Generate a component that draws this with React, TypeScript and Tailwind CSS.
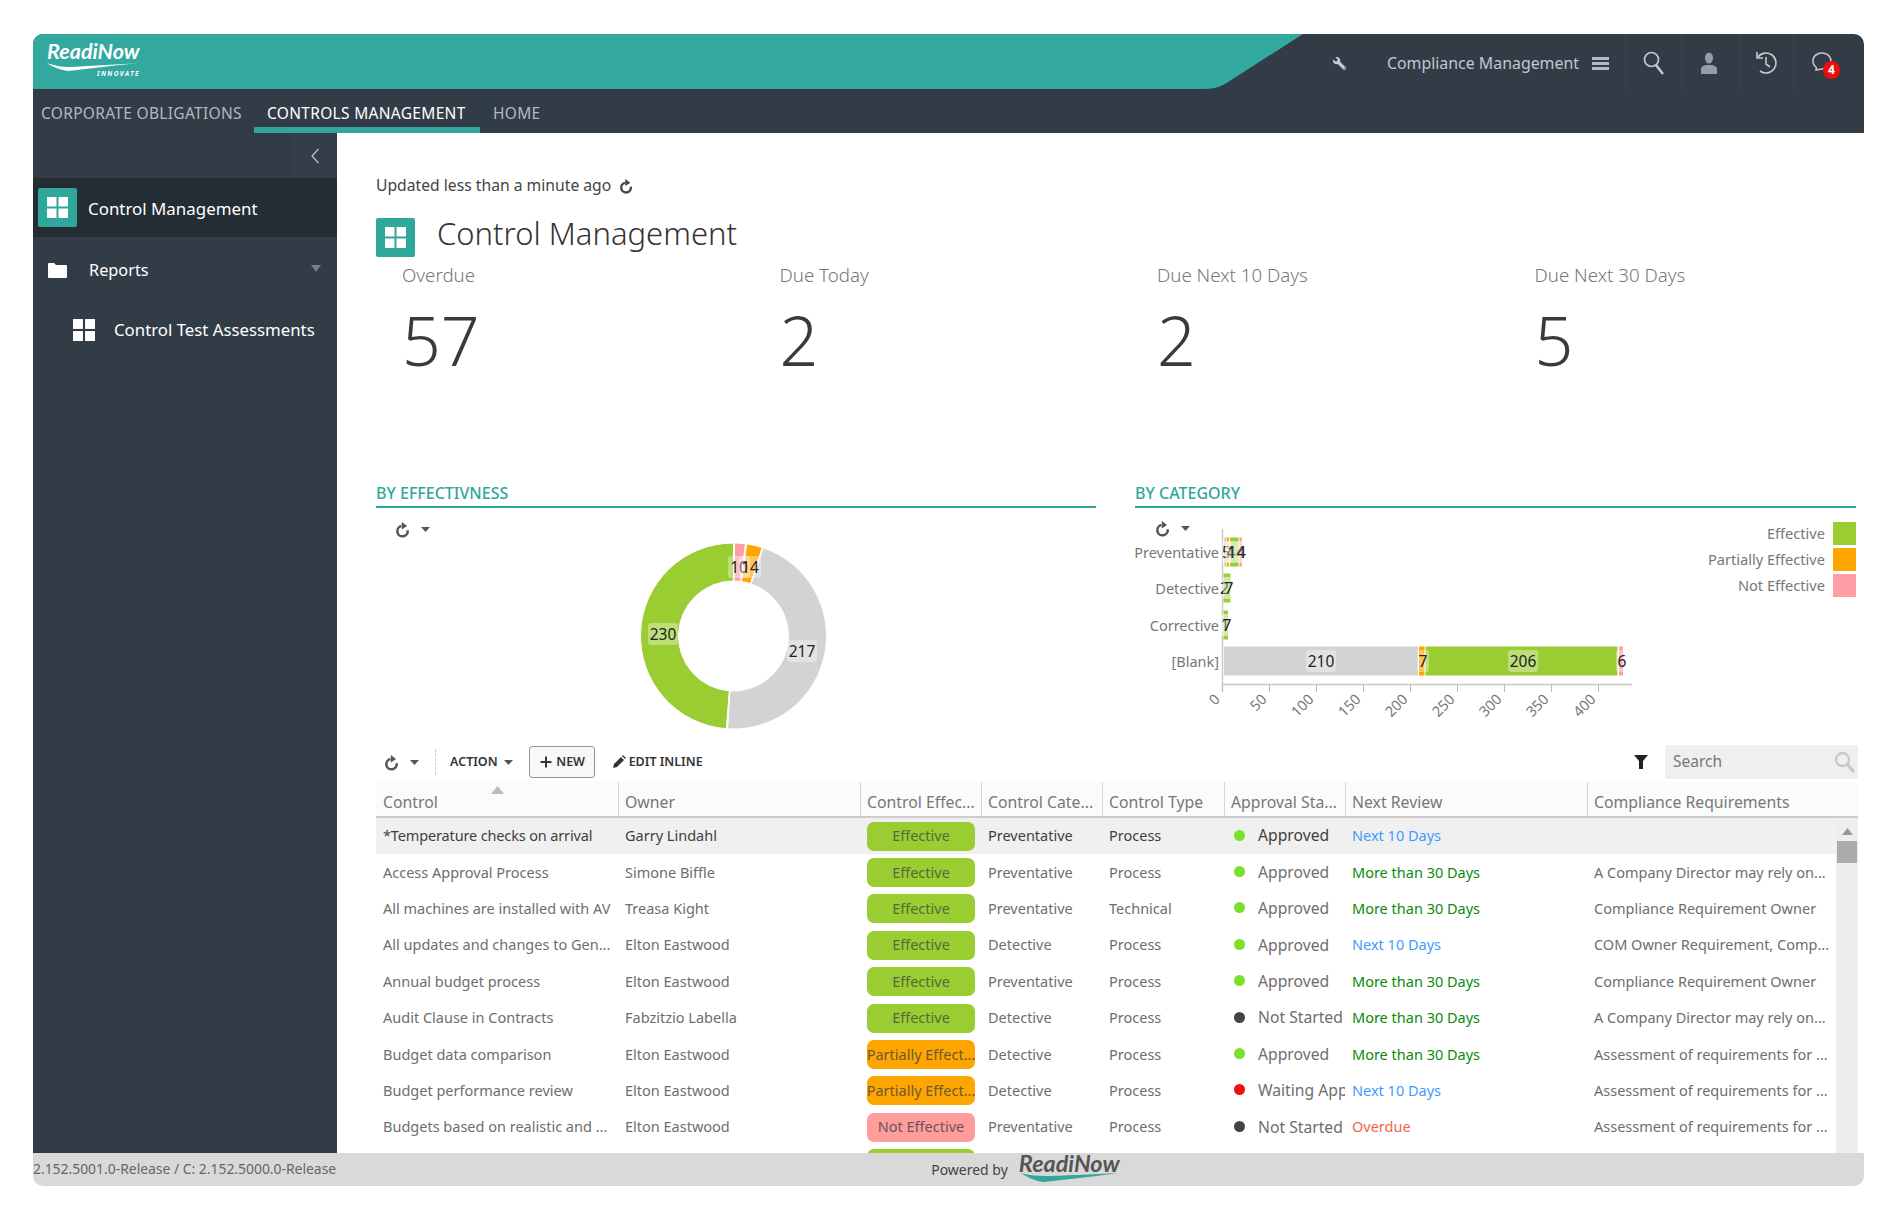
import React from "react";
import { Plus } from "lucide-react";
import { FaWrench } from "react-icons/fa";

const Refresh = ({ s = 17, c = "#444" }: { s?: number; c?: string }) => (
  <svg width={s} height={s} viewBox="0 0 24 24" className="shrink-0">
    <path d="M10.5 7.2A7.3 7.3 0 1 0 19.2 13" fill="none" stroke={c} strokeWidth="3.6" />
    <path d="M11 1.5l7.5 5.7-7.5 4.8z" fill={c} />
  </svg>
);
const Caret = ({ c = "#555" }: { c?: string }) => (
  <svg width="9" height="5" viewBox="0 0 9 5" className="shrink-0">
    <path d="M0 0h9L4.5 5z" fill={c} />
  </svg>
);
const Grid4 = ({ s = 21 }: { s?: number }) => (
  <svg width={s} height={s} viewBox="0 0 21 21" className="shrink-0">
    <rect x="0" y="0" width="9.5" height="9.5" fill="#fff" />
    <rect x="11.5" y="0" width="9.5" height="9.5" fill="#fff" />
    <rect x="0" y="11.5" width="9.5" height="9.5" fill="#fff" />
    <rect x="11.5" y="11.5" width="9.5" height="9.5" fill="#fff" />
  </svg>
);
const TealBox = () => (
  <div className="w-[39px] h-[39px] bg-[#2fa79b] rounded-[2px] flex items-center justify-center shrink-0">
    <Grid4 />
  </div>
);

const HeaderCell = ({ w, children }: { w: string; children: React.ReactNode }) => (
  <div className={`${w} h-full pt-[3px] flex items-center justify-center border-l border-dotted border-[#45505c] relative`}>{children}</div>
);

type Row = [string, string, string, string, string, string, string, string, string];
const G = "#7be02a";
const rows: Row[] = [
  ["*Temperature checks on arrival", "Garry Lindahl", "Effective", "Preventative", "Process", "Approved", "Next 10 Days", "", G],
  ["Access Approval Process", "Simone Biffle", "Effective", "Preventative", "Process", "Approved", "More than 30 Days", "A Company Director may rely on...", G],
  ["All machines are installed with AV", "Treasa Kight", "Effective", "Preventative", "Technical", "Approved", "More than 30 Days", "Compliance Requirement Owner", G],
  ["All updates and changes to Gen...", "Elton Eastwood", "Effective", "Detective", "Process", "Approved", "Next 10 Days", "COM Owner Requirement, Comp...", G],
  ["Annual budget process", "Elton Eastwood", "Effective", "Preventative", "Process", "Approved", "More than 30 Days", "Compliance Requirement Owner", G],
  ["Audit Clause in Contracts", "Fabzitzio Labella", "Effective", "Detective", "Process", "Not Started", "More than 30 Days", "A Company Director may rely on...", "#444"],
  ["Budget data comparison", "Elton Eastwood", "Partially Effect...", "Detective", "Process", "Approved", "More than 30 Days", "Assessment of requirements for ...", G],
  ["Budget performance review", "Elton Eastwood", "Partially Effect...", "Detective", "Process", "Waiting Approval", "Next 10 Days", "Assessment of requirements for ...", "#f01010"],
  ["Budgets based on realistic and ...", "Elton Eastwood", "Not Effective", "Preventative", "Process", "Not Started", "Overdue", "Assessment of requirements for ...", "#444"],
];

const pillClass = (v: string) =>
  v === "Effective"
    ? "bg-[#9acd32] text-[#56693a]"
    : v === "Not Effective"
    ? "bg-[#ff9c9c] text-[#6a5558]"
    : "bg-[#ffa500] text-[#6b5a33]";

const reviewClass = (v: string) =>
  v === "Next 10 Days" ? "text-[#3f9bff]" : v === "Overdue" ? "text-[#f2634d]" : "text-[#0b8a0b]";

const cols = "grid grid-cols-[242px_242px_121px_121px_122px_121px_242px_249px]";

const polar = (cx: number, cy: number, r: number, a: number) => {
  const t = ((a - 90) * Math.PI) / 180;
  return [cx + r * Math.cos(t), cy + r * Math.sin(t)];
};
const slice = (a0: number, a1: number) => {
  const cx = 297.5, cy = 129, R = 93, r = 55;
  const [x0, y0] = polar(cx, cy, R, a0);
  const [x1, y1] = polar(cx, cy, R, a1);
  const [x2, y2] = polar(cx, cy, r, a1);
  const [x3, y3] = polar(cx, cy, r, a0);
  const l = a1 - a0 > 180 ? 1 : 0;
  return `M${x0} ${y0}A${R} ${R} 0 ${l} 1 ${x1} ${y1}L${x2} ${y2}A${r} ${r} 0 ${l} 0 ${x3} ${y3}Z`;
};

const ChartLabel = ({ x, y, t, w }: { x: number; y: number; t: string; w: number }) => (
  <g>
    <rect x={x - w / 2 - 2} y={y - 11} width={w + 4} height={22} rx="3" fill="#fff" opacity="0.35" />
    <text x={x} y={y} textAnchor="middle" dominantBaseline="central" className="text-[15.5px] fill-[#222]">
      {t}
    </text>
  </g>
);

const Donut = () => (
  <svg width="660" height="233" viewBox="0 0 660 233">
    <path d={slice(0.6, 7.4)} fill="#ff9ea6" stroke="#fff" strokeWidth="1" />
    <path d={slice(8.2, 18)} fill="#ffa500" stroke="#fff" strokeWidth="1" />
    <path d={slice(18.6, 183.6)} fill="#d3d3d3" stroke="#fff" strokeWidth="1" />
    <path d={slice(184.4, 360)} fill="#9acd32" stroke="#fff" strokeWidth="1" />
    <ChartLabel x={303} y={60} t="10" w={18} />
    <ChartLabel x={314} y={60} t="14" w={18} />
    <ChartLabel x={227} y={127} t="230" w={26} />
    <ChartLabel x={366} y={144} t="217" w={26} />
  </svg>
);

const Bar = ({ x0, x1, y, c }: { x0: number; x1: number; y: number; c: string }) => (
  <rect x={x0} y={y - 14.5} width={x1 - x0} height={29} fill={c} />
);

const BarChart = () => (
  <svg width="520" height="233" viewBox="0 0 520 233">
    <path d="M87.5 22V185M87.5 177.5H497" stroke="#c9c9c9" strokeWidth="1.5" fill="none" />
    {[0, 50, 100, 150, 200, 250, 300, 350, 400].map((v, i) => (
      <g key={v}>
        <path d={`M${87.5 + 47 * i} 177V185`} stroke="#bdbdbd" strokeWidth="1" />
        <text
          x={87.5 + 47 * i - 6}
          y={189}
          textAnchor="end"
          transform={`rotate(-45 ${87.5 + 47 * i - 6} 189)`}
          dominantBaseline="central"
          className="text-[14.5px] fill-[#777]"
        >
          {v}
        </text>
      </g>
    ))}
    {[
      ["Preventative", 45],
      ["Detective", 81],
      ["Corrective", 118],
      ["[Blank]", 154],
    ].map(([t, y]) => (
      <text key={t as string} x={84} y={y as number} textAnchor="end" dominantBaseline="central" className="text-[14.5px] fill-[#777]">
        {t}
      </text>
    ))}
    <Bar x0={89} x1={91} y={45} c="#d3d3d3" />
    <Bar x0={91.5} x1={94} y={45} c="#ffa500" />
    <Bar x0={95} x1={103.5} y={45} c="#9acd32" />
    <Bar x0={104.5} x1={107} y={45} c="#ff9ea6" />
    <Bar x0={88.5} x1={95.5} y={81} c="#9acd32" />
    <Bar x0={88.5} x1={93} y={118} c="#9acd32" />
    <Bar x0={89} x1={283} y={154} c="#d3d3d3" />
    <Bar x0={284} x1={289.5} y={154} c="#ffa500" />
    <Bar x0={290.5} x1={482.5} y={154} c="#9acd32" />
    <Bar x0={484} x1={488} y={154} c="#ff9ea6" />
    <ChartLabel x={91.5} y={45} t="5" w={8} />
    <ChartLabel x={96} y={45} t="4" w={8} />
    <ChartLabel x={101} y={45} t="14" w={16} />
    <ChartLabel x={106.5} y={45} t="4" w={8} />
    <ChartLabel x={89.5} y={81} t="2" w={8} />
    <ChartLabel x={94} y={81} t="7" w={8} />
    <ChartLabel x={90} y={118} t="1" w={8} />
    <ChartLabel x={92} y={118} t="7" w={8} />
    <ChartLabel x={186} y={154} t="210" w={26} />
    <ChartLabel x={288} y={154} t="7" w={8} />
    <ChartLabel x={388} y={154} t="206" w={26} />
    <ChartLabel x={487} y={154} t="6" w={8} />
  </svg>
);

const Legend = ({ t, c }: { t: string; c: string }) => (
  <div className="flex items-center justify-end gap-[8px] h-[23px]">
    <span className="text-[14.6px] text-[#777] whitespace-nowrap">{t}</span>
    <span className="w-[23px] h-[23px] block" style={{ background: c }} />
  </div>
);

const Kpi = ({ label, value }: { label: string; value: string }) => (
  <div className="w-[377.5px] shrink-0 pl-[26px]">
    <div className="text-[18.7px] leading-[24px] text-[#777] font-light">{label}</div>
    <div className="text-[68px] leading-[80px] mt-[13px] text-[#3a3a3a] font-light">{value}</div>
  </div>
);

export default function App() {
  return (
    <div className="w-[1903px] h-[1222px] bg-white overflow-hidden pt-[34px] pl-[33px] font-['Noto_Sans',sans-serif]">
      <div className="w-[1831px] h-[1152px] flex flex-col rounded-t-[10px] rounded-b-[10px] overflow-hidden">
        {/* Header */}
        <div className="h-[55px] bg-[#323c47] relative flex items-center shrink-0">
          <svg width="1320" height="55" viewBox="0 0 1320 55" className="absolute left-0 top-0">
            <path d="M0 0H1270L1192 50Q1184 55 1170 55H0Z" fill="#32a89e" />
          </svg>
          <div className="relative ml-[14px] w-[93px] h-[50px] mt-[1px]">
            <div className="text-[21.5px] leading-[25px] mt-[2px] font-bold italic text-white font-['Lato',sans-serif]">ReadiNow</div>
            <svg width="93" height="12" viewBox="0 0 96 12" className="block -mt-[2px]">
              <path d="M0 1C6 5 14 8 22 9C40 7 70 3 94 1C70 2 40 4 24 5C14 5 8 3 0 1Z" fill="#fff" />
            </svg>
            <div className="text-[6.5px] leading-[8px] text-right font-bold italic tracking-[0.22em] text-white -mt-[4px]">INNOVATE</div>
          </div>
          <div className="relative ml-auto h-full flex items-center pr-[17px]">
            <FaWrench size={13} color="#c9ccd0" className="mr-[41px] mt-[3px] -scale-x-100" />
            <span className="text-[15.9px] text-[#c3c7cb] whitespace-nowrap mt-[4px]">Compliance Management</span>
            <svg width="17" height="13" viewBox="0 0 17 13" className="ml-[13px] mr-[16px] mt-[4px]">
              <path d="M0 0h17v3H0zM0 5h17v3H0zM0 10h17v3H0z" fill="#b4b9be" />
            </svg>
            <HeaderCell w="w-[56px]">
              <svg width="22" height="24" viewBox="0 0 22 24" fill="none" stroke="#c3c7cb">
                <circle cx="8.5" cy="8.5" r="7" strokeWidth="1.7" />
                <path d="M13 14l7 9" strokeWidth="2.6" />
              </svg>
            </HeaderCell>
            <HeaderCell w="w-[58px]">
              <svg width="16" height="22" viewBox="0 0 16 22" className="-ml-[4px]">
                <ellipse cx="8" cy="6" rx="4" ry="5.5" fill="#969ca3" />
                <path d="M0 22v-5q0-3 5-4h6q5 1 5 4v5z" fill="#969ca3" />
              </svg>
            </HeaderCell>
            <HeaderCell w="w-[54px]">
              <svg width="24" height="26" viewBox="0 0 24 26" fill="none" stroke="#c3c7cb" strokeWidth="1.6" className="-ml-[2px]">
                <path d="M4 7A10 10 0 1 1 6 21" />
                <path d="M3 2v6h6" />
                <path d="M12 7v7l4 3" />
              </svg>
            </HeaderCell>
            <HeaderCell w="w-[54px]">
              <svg width="24" height="24" viewBox="0 0 24 24" fill="none" stroke="#c3c7cb" strokeWidth="1.6" className="-mt-[4px]">
                <path d="M7 21c1-2 0-3 0-3a9 8 0 1 1 6 2z" />
              </svg>
              <span className="absolute left-[29px] top-[27px] w-[17px] h-[18px] rounded-full bg-[#ee0d0d] text-white text-[12px] leading-[18px] font-bold text-center">4</span>
            </HeaderCell>
          </div>
        </div>
        {/* Nav */}
        <div className="h-[44px] bg-[#323c47] flex items-stretch shrink-0 text-[15.5px] tracking-[0.02em]">
          <div className="pl-[8px] w-[221px] flex items-center text-[#b4b9be] whitespace-nowrap pt-[6px]">CORPORATE OBLIGATIONS</div>
          <div className="w-[226px] px-[13px] flex items-center text-white border-b-[6px] border-[#2fa79b] whitespace-nowrap pt-[12px]">CONTROLS MANAGEMENT</div>
          <div className="pl-[13px] flex items-center text-[#b4b9be] pt-[6px]">HOME</div>
        </div>
        {/* Body */}
        <div className="flex flex-1 min-h-0">
          <aside className="w-[304px] bg-[#323c47] shrink-0 text-white">
            <div className="h-[45px] flex justify-end">
              <div className="w-[45px] h-full bg-[#343e49] flex items-center justify-center">
                <svg width="10" height="16" viewBox="0 0 10 16" fill="none" stroke="#c3c7cb" strokeWidth="1.2">
                  <path d="M8.5 1L2 8l6.5 7" />
                </svg>
              </div>
            </div>
            <div className="h-[59px] bg-[#242c34] flex items-center pl-[5px] gap-[11px]">
              <TealBox />
              <span className="text-[16.9px] mt-[2px]">Control Management</span>
            </div>
            <div className="h-[66px] flex items-center pl-[15px] pr-[16px]">
              <svg width="19" height="15" viewBox="0 0 19 15" className="shrink-0">
                <path d="M0 1q0-1 1-1h5l2 2h10q1 0 1 1v11q0 1-1 1H1q-1 0-1-1z" fill="#fff" />
              </svg>
              <span className="text-[16.3px] ml-[22px]">Reports</span>
              <svg width="10" height="7" viewBox="0 0 10 7" className="ml-auto -mt-[4px]">
                <path d="M0 0h10L5 7z" fill="#777f87" />
              </svg>
            </div>
            <div className="flex items-center pl-[40px] h-[33px] mt-[10px] gap-[19px]">
              <Grid4 s={22} />
              <span className="text-[16.8px] whitespace-nowrap">Control Test Assessments</span>
            </div>
          </aside>
          <main className="w-[1527px] bg-white overflow-hidden pl-[39px] pt-[41px] relative">
            <div className="h-[24px] flex items-center gap-[7px] text-[15.7px] text-[#444]">
              <span>Updated less than a minute ago</span>
              <Refresh s={16} />
            </div>
            <div className="mt-[20px] h-[39px] flex items-center gap-[22px]">
              <TealBox />
              <h1 className="text-[31px] font-light text-[#333] whitespace-nowrap pb-[8px]">Control Management</h1>
            </div>
            <div className="flex mt-[6px] h-[218px]">
              <Kpi label="Overdue" value="57" />
              <Kpi label="Due Today" value="2" />
              <Kpi label="Due Next 10 Days" value="2" />
              <Kpi label="Due Next 30 Days" value="5" />
            </div>
            <div className="flex gap-[39px] h-[259px]">
              <section className="w-[720px] shrink-0">
                <div className="h-[27px] border-b-2 border-[#2fa79b] text-[16px] font-medium text-[#2fa79b] leading-[24px]">BY EFFECTIVNESS</div>
                <div className="flex h-[233px] -mt-[1px]">
                  <div className="w-[60px] pl-[18px] pt-[12px] flex items-center gap-[10px] h-[30px] mt-[1px]">
                    <Refresh c="#555" />
                    <Caret />
                  </div>
                  <Donut />
                </div>
              </section>
              <section className="w-[721px] shrink-0 relative">
                <div className="h-[27px] border-b-2 border-[#2fa79b] text-[16px] font-medium text-[#2fa79b] leading-[24px]">BY CATEGORY</div>
                <div className="flex h-[233px] -mt-[1px]">
                  <BarChart />
                  <div className="flex-1 pt-[15px] flex flex-col gap-[3px]">
                    <Legend t="Effective" c="#9acd32" />
                    <Legend t="Partially Effective" c="#ffa500" />
                    <Legend t="Not Effective" c="#ff9ea6" />
                  </div>
                </div>
                <div className="absolute left-[19px] top-[39px] flex items-center gap-[10px]">
                  <Refresh c="#555" />
                  <Caret />
                </div>
              </section>
            </div>
            {/* toolbar */}
            <div className="h-[36px] flex items-center w-[1482px] text-[12.5px] font-semibold text-[#333] mt-[5px] pb-[2px]">
              <div className="pl-[7px] flex items-center gap-[10px] w-[60px] h-[26px] border-r border-dashed border-[#ccc]">
                <Refresh c="#555" />
                <Caret />
              </div>
              <span className="ml-[14px]">ACTION</span>
              <span className="ml-[6px]"><Caret /></span>
              <button className="ml-[16px] w-[66px] h-[32px] border border-[#999] rounded-[3px] bg-[#f8f8f8] flex items-center justify-center gap-[2px] font-semibold">
                <Plus size={16} strokeWidth={3} />
                NEW
              </button>
              <svg width="14" height="14" viewBox="0 0 14 14" className="ml-[17px] mr-[3px]">
                <path d="M1 13l1-4 7-7 3 3-7 7zM10 1l1-1 3 3-1 1z" fill="#333" />
              </svg>
              <span>EDIT INLINE</span>
              <svg width="14" height="14" viewBox="0 0 14 14" className="ml-auto mr-[17px]">
                <path d="M0 0h14L9 6v8H5V6z" fill="#222" />
              </svg>
              <div className="w-[193px] h-[34px] bg-[#efefef] rounded-[2px] flex items-center pl-[8px] pr-[2px] text-[15.5px] font-normal text-[#777]">
                <span>Search</span>
                <svg width="22" height="22" viewBox="0 0 22 22" fill="none" stroke="#c9c9c9" className="ml-auto">
                  <circle cx="8.5" cy="8.5" r="6.5" strokeWidth="2.4" />
                  <path d="M13 13l7 8" strokeWidth="3.4" />
                </svg>
              </div>
            </div>
            {/* table header */}
            <div className="w-[1482px] h-[36px] mt-[1px] bg-[#fbfbfb] border-b-2 border-[#ccc] grid grid-cols-[242px_242px_121px_121px_122px_121px_242px_271px] text-[15.8px] text-[#777]">
              {["Control", "Owner", "Control Effec...", "Control Cate...", "Control Type", "Approval Sta...", "Next Review", "Compliance Requirements"].map((h, i) => (
                <div key={h} className={`flex items-end pb-[1px] whitespace-nowrap overflow-hidden relative ${i > 0 ? "pl-[6px] border-l border-[#d5d5d5]" : "pl-[7px]"}`}>
                  {h}
                  {i === 0 && (
                    <svg width="13" height="8" viewBox="0 0 13 8" className="absolute left-[115px] top-[4px]">
                      <path d="M0 8h13L6.5 0z" fill="#bbb" />
                    </svg>
                  )}
                </div>
              ))}
            </div>
            {/* table body */}
            <div className="w-[1482px] flex h-[340px]">
              <div className="w-[1460px] shrink-0 overflow-hidden">
                {rows.map((r, i) => (
                  <div key={r[0]} className={`${cols} h-[36.4px] items-center text-[14.5px] ${i === 0 ? "bg-[#f0f0f0] text-[#3f3f3f]" : "text-[#6e6e6e]"}`}>
                    <div className={`pl-[7px] whitespace-nowrap overflow-hidden ${i === 0 ? "tracking-[-0.01em]" : ""}`}>{r[0]}</div>
                    <div className="pl-[7px] whitespace-nowrap overflow-hidden">{r[1]}</div>
                    <div className="pl-[7px] pr-[6px]">
                      <div className={`h-[29px] rounded-[7px] flex items-center justify-center whitespace-nowrap overflow-hidden ${pillClass(r[2])}`}>{r[2]}</div>
                    </div>
                    <div className="pl-[7px] whitespace-nowrap overflow-hidden">{r[3]}</div>
                    <div className="pl-[7px] whitespace-nowrap overflow-hidden">{r[4]}</div>
                    <div className="pl-[10px] flex items-center whitespace-nowrap overflow-hidden text-[15.7px]">
                      <span className="w-[11px] h-[11px] rounded-full shrink-0 mr-[13px] -mt-[2px]" style={{ background: r[8] }} />
                      {r[5]}
                    </div>
                    <div className={`pl-[7px] whitespace-nowrap overflow-hidden ${reviewClass(r[6])}`}>{r[6]}</div>
                    <div className="pl-[7px] whitespace-nowrap overflow-hidden">{r[7]}</div>
                  </div>
                ))}
                <div className={`${cols} h-[36.4px] items-center`}>
                  <div />
                  <div />
                  <div className="pl-[7px] pr-[6px]">
                    <div className="h-[29px] rounded-[7px] bg-[#9acd32]" />
                  </div>
                </div>
              </div>
              <div className="w-[22px] bg-[#eeeeee] flex flex-col items-center">
                <svg width="11" height="7" viewBox="0 0 11 7" className="mt-[10px]">
                  <path d="M0 7h11L5.5 0z" fill="#999" />
                </svg>
                <div className="w-[20px] h-[22px] bg-[#ababab] mt-[6px]" />
              </div>
            </div>
          </main>
        </div>
        {/* Footer */}
        <div className="h-[33px] bg-[#d9d9d9] shrink-0 flex items-center text-[13.9px] text-[#666] relative">
          <span className="whitespace-nowrap">2.152.5001.0-Release / C: 2.152.5000.0-Release</span>
          <span className="ml-[595px] text-[#444] text-[14px] whitespace-nowrap">Powered by</span>
          <div className="ml-[11px] relative -mt-[4px]">
            <div className="text-[23.4px] leading-[22px] font-bold italic text-[#555] font-['Lato',sans-serif]">ReadiNow</div>
            <svg width="100" height="10" viewBox="0 0 100 10" className="block -mt-[1px]">
              <path d="M2 0C8 4 16 8 24 9C50 6 80 3 98 0C76 1 40 3 26 3C16 3 8 2 2 0Z" fill="#2fa79b" />
            </svg>
          </div>
        </div>
      </div>
    </div>
  );
}
